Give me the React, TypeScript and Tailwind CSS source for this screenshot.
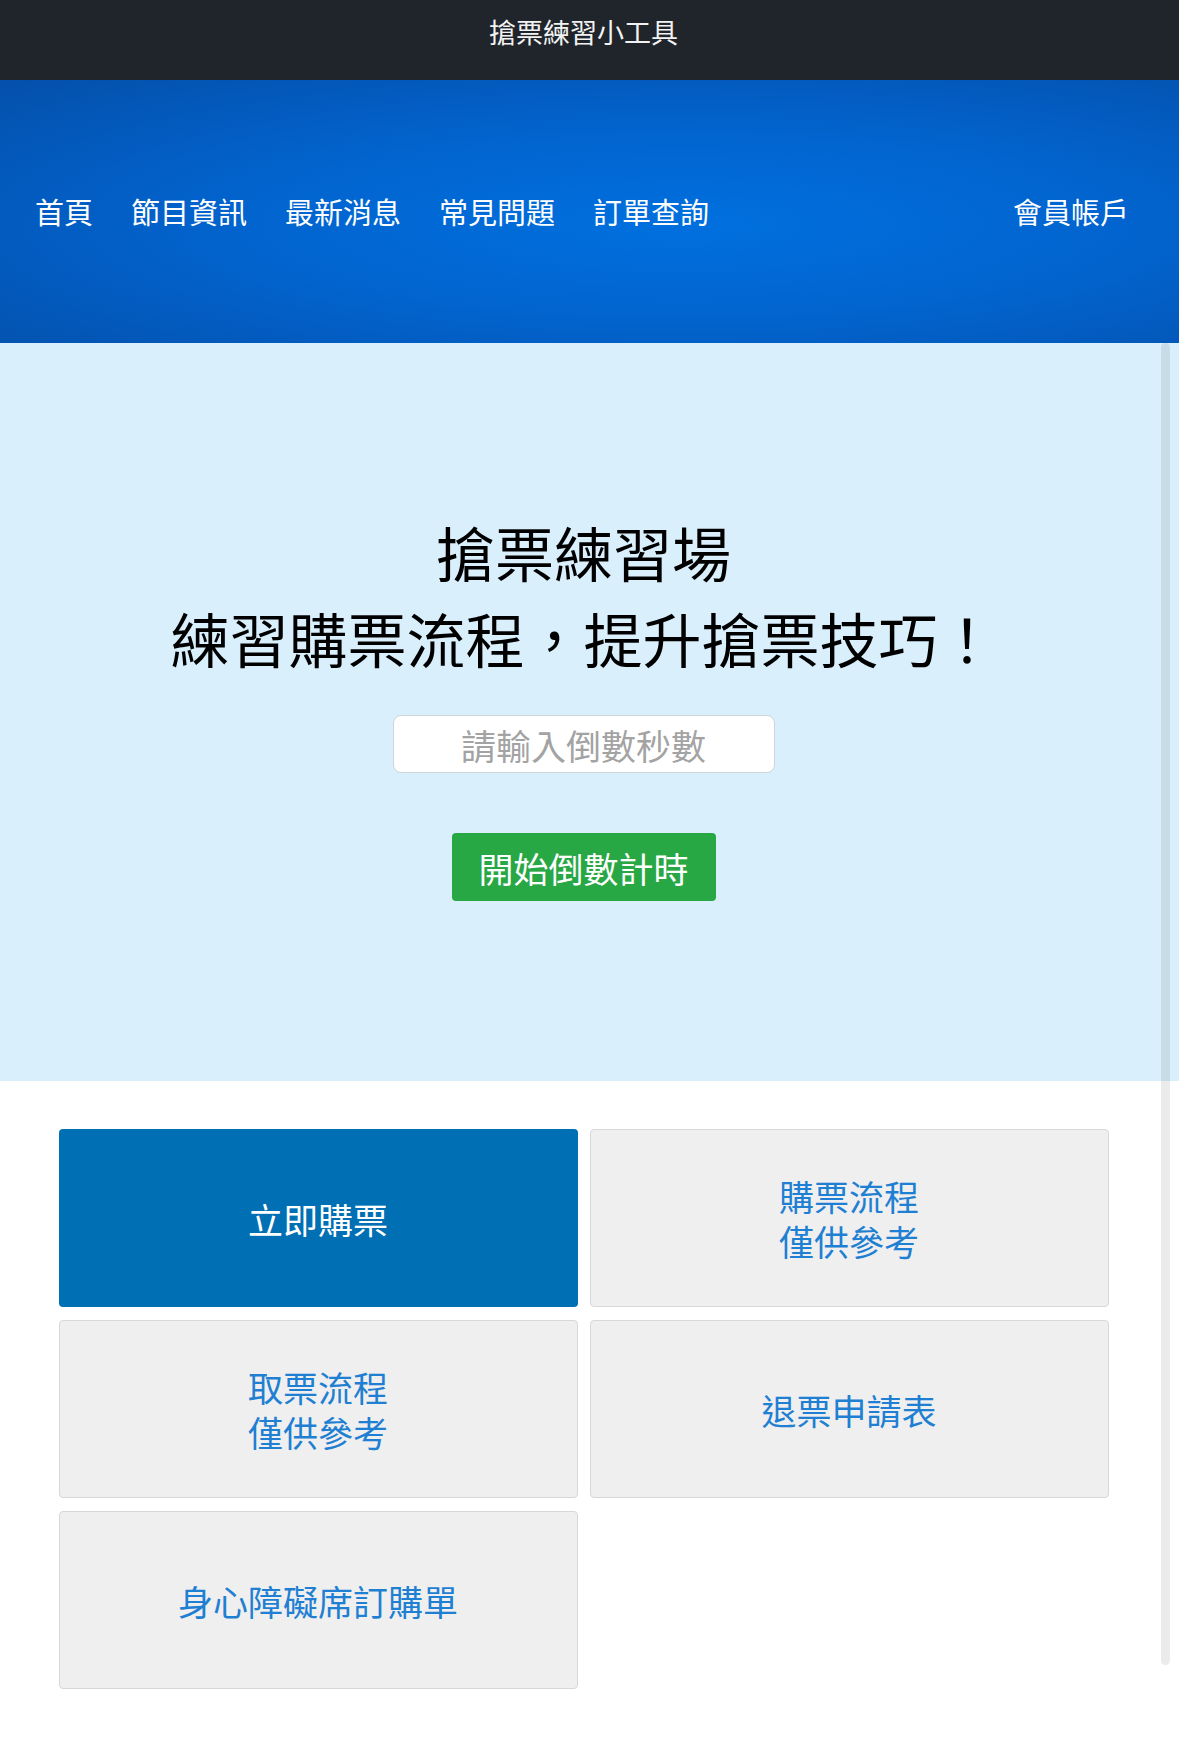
const navItems = ["首頁", "節目資訊", "最新消息", "常見問題", "訂單查詢"];

const cards = [
  { lines: ["立即購票"], primary: true },
  { lines: ["購票流程", "僅供參考"] },
  { lines: ["取票流程", "僅供參考"] },
  { lines: ["退票申請表"] },
  { lines: ["身心障礙席訂購單"] },
];

export default function App() {
  return (
    <div className="relative min-h-[1747px] w-full bg-white font-['Noto_Sans_CJK_TC','Noto_Sans_CJK_SC',sans-serif]">
      {/* Title bar */}
      <header className="flex h-[80px] items-center justify-center bg-[#1f252b] pr-[12px] pb-[18px]">
        <span className="text-[27px] leading-none text-[#f2f2f2]">搶票練習小工具</span>
      </header>

      {/* Nav */}
      <nav className="flex h-[263px] items-center justify-between bg-[radial-gradient(ellipse_at_58%_55%,#0070de_0%,#0264cf_45%,#0450ab_100%)] pl-[35px] pr-[50px]">
        <ul className="flex gap-[38px]">
          {navItems.map((item) => (
            <li key={item} className="text-[29px] leading-none text-white">
              {item}
            </li>
          ))}
        </ul>
        <span className="text-[29px] leading-none text-white">會員帳戶</span>
      </nav>

      {/* Hero */}
      <section className="flex flex-col items-center bg-[#d9effc] pt-[166px] pb-[180px] pr-[12px]">
        <h1 className="text-center text-[59px] font-normal leading-[86px] text-black">
          搶票練習場
          <br />
          練習購票流程，提升搶票技巧！
        </h1>
        <input
          type="text"
          placeholder="請輸入倒數秒數"
          className="mt-[34px] h-[58px] w-[382px] rounded-[8px] border border-[#cfd4d8] bg-white text-center text-[35px] text-black outline-none placeholder:text-[#a3a3a3]"
        />
        <button className="mt-[60px] h-[68px] w-[264px] rounded-[4px] bg-[#28a745] text-[35px] leading-none text-white">
          開始倒數計時
        </button>
      </section>

      {/* Cards */}
      <section className="pt-[48px] pr-[12px] pb-[58px]">
        <div className="mx-auto grid w-[1050px] grid-cols-2 gap-x-[12px] gap-y-[13px]">
          {cards.map((card, i) => (
            <div
              key={i}
              className={
                card.primary
                  ? "flex h-[178px] items-center justify-center rounded-[4px] bg-[#016fb4] text-center text-[35px] leading-[45px] text-white"
                  : "flex h-[178px] items-center justify-center rounded-[4px] border border-[#d8d8d8] bg-[#efefef] text-center text-[35px] leading-[45px] text-[#1f7fd2]"
              }
            >
              <p>
                {card.lines.map((line, j) => (
                  <span key={line}>
                    {j > 0 && <br />}
                    {line}
                  </span>
                ))}
              </p>
            </div>
          ))}
        </div>
      </section>

      {/* Overlay scroll indicator */}
      <div className="absolute right-[9px] top-[343px] h-[1322px] w-[9px] rounded-full bg-black/[0.08]" />
    </div>
  );
}
